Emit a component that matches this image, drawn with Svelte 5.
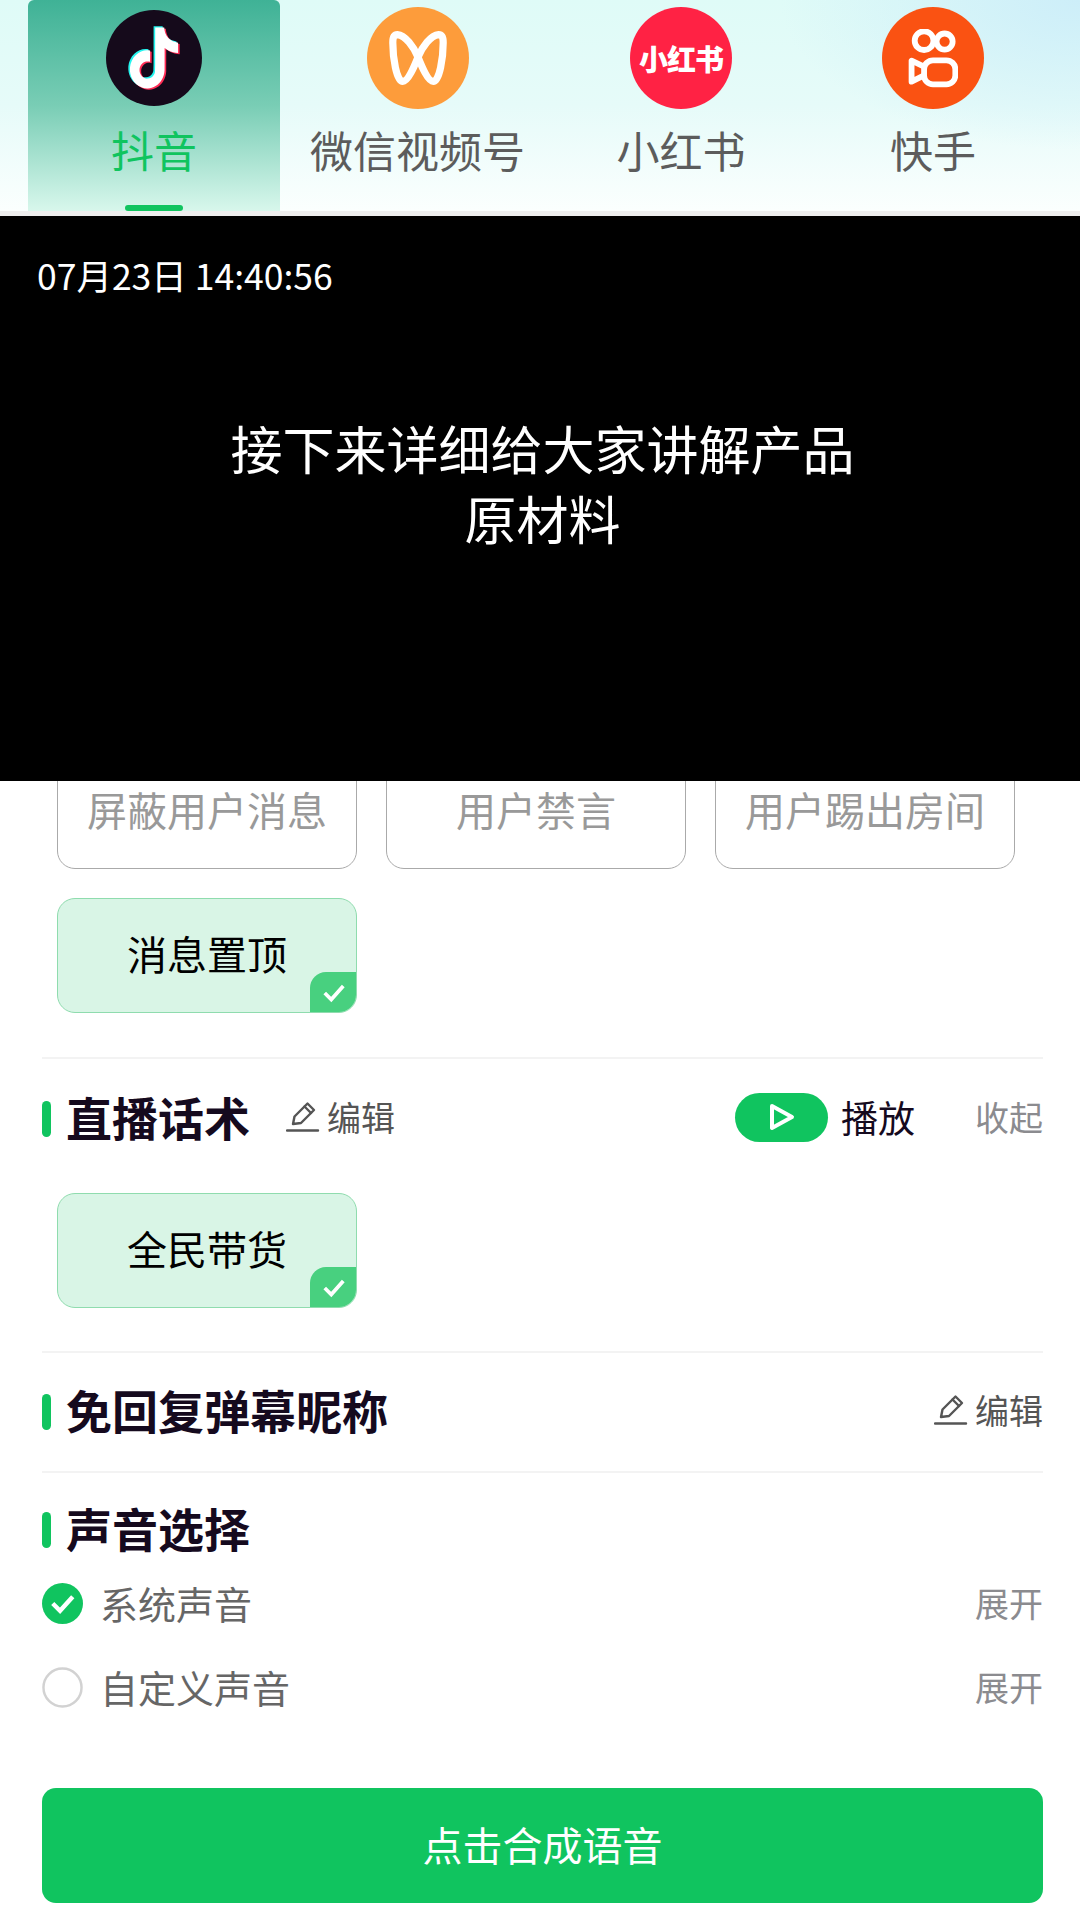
<script lang="ts">
  const tabs = [
    { id: "douyin", label: "抖音", active: true },
    { id: "wechat", label: "微信视频号" },
    { id: "xhs", label: "小红书" },
    { id: "kuaishou", label: "快手" },
  ];

  const note =
    "M12.525.02c1.31-.02 2.61-.01 3.91-.02.08 1.53.63 3.09 1.75 4.17 1.12 1.11 2.7 1.62 4.24 1.79v4.03c-1.44-.05-2.89-.35-4.2-.97-.57-.26-1.1-.59-1.62-.93-.01 2.92.01 5.84-.02 8.75-.08 1.4-.54 2.79-1.35 3.94-1.31 1.92-3.58 3.17-5.91 3.21-1.43.08-2.86-.31-4.08-1.03-2.02-1.19-3.44-3.37-3.65-5.71-.02-.5-.03-1-.01-1.49.18-1.9 1.12-3.72 2.58-4.96 1.66-1.44 3.98-2.13 6.15-1.72.02 1.48-.04 2.96-.04 4.44-.99-.32-2.15-.23-3.02.37-.63.41-1.11 1.04-1.36 1.75-.21.51-.15 1.07-.14 1.61.24 1.64 1.82 3.02 3.5 2.87 1.12-.01 2.19-.66 2.77-1.61.19-.33.4-.67.41-1.06.1-1.79.06-3.57.07-5.36.01-4.03-.01-8.05.02-12.07z";
</script>

{#snippet edit()}
  <span class="edit">
    <svg width="34" height="34" viewBox="0 0 34 34" fill="none" stroke="#555" stroke-width="2.4" stroke-linejoin="round" stroke-linecap="round">
      <path d="M7 25 L8.5 17.5 L21.5 4.5 L28 11 L15 24 Z" />
      <path d="M18.5 7.5 L25 14" />
      <path d="M1 31.5 H32" />
    </svg>
    编辑
  </span>
{/snippet}

{#snippet heading(title)}
  <div class="title"><i class="bar"></i><h2>{title}</h2></div>
{/snippet}

{#snippet chip(label)}
  <div class="chip on">
    {label}
    <span class="corner">
      <svg width="24" height="20" viewBox="0 0 22 18" fill="none" stroke="#fff" stroke-width="3.4">
        <path d="M2.5 9 L8.5 15 L19.5 2.5" />
      </svg>
    </span>
  </div>
{/snippet}

<div class="page">
  <header class="tabs">
    {#each tabs as tab}
      <div class="tab" class:active={tab.active}>
        <span class="logo {tab.id}">
          {#if tab.id === "douyin"}
            <svg width="60" height="66" viewBox="-1 -1 26 26" preserveAspectRatio="none">
              <path d={note} fill="#25f4ee" transform="translate(-0.7 -0.5)" />
              <path d={note} fill="#fe2c55" transform="translate(0.7 0.5)" />
              <path d={note} fill="#fff" />
            </svg>
          {:else if tab.id === "wechat"}
            <svg width="58" height="54" viewBox="0 0 64 60" fill="none" stroke="#fff" stroke-width="8" stroke-linejoin="round">
              <path d="M32 29 C27 17 18 5 9 4 C5 4 4 8 4 13 C4 29 8 56 15 56 C21 56 28 39 32 29 C36 39 43 56 49 56 C56 56 60 29 60 13 C60 8 59 4 55 4 C46 5 37 17 32 29 Z" />
            </svg>
          {:else if tab.id === "xhs"}
            <span class="xhs-mark">小红书</span>
          {:else}
            <svg width="50" height="59" viewBox="0 0 56 66" fill="none" stroke="#fff" stroke-width="6.5" stroke-linejoin="round">
              <circle cx="18" cy="13" r="10.5" />
              <circle cx="41" cy="14" r="9" />
              <rect x="18" y="35" width="35" height="27" rx="10" />
              <path d="M18 42 L4 35.5 V59 L18 52" />
            </svg>
          {/if}
        </span>
        <span class="label">{tab.label}</span>
        {#if tab.active}<i class="underline"></i>{/if}
      </div>
    {/each}
  </header>

  <section class="video">
    <time>07月23日 14:40:56</time>
    <p>接下来详细给大家讲解产品<br />原材料</p>
  </section>

  <main class="scroller">
    <div class="chips first">
      <div class="chip">屏蔽用户消息</div>
      <div class="chip">用户禁言</div>
      <div class="chip">用户踢出房间</div>
      {@render chip("消息置顶")}
    </div>

    <div class="block script">
      <div class="head">
        {@render heading("直播话术")}
        {@render edit()}
        <span class="play">
          <span class="pill">
            <svg width="28" height="30" viewBox="0 0 28 30" fill="none" stroke="#fff" stroke-width="4" stroke-linejoin="round">
              <path d="M4 4 L24 15 L4 26 Z" />
            </svg>
          </span>
          播放
        </span>
        <span class="more">收起</span>
      </div>
      <div class="chips">
        {@render chip("全民带货")}
      </div>
    </div>

    <div class="block nick">
      <div class="head">
        {@render heading("免回复弹幕昵称")}
        <span class="push">{@render edit()}</span>
      </div>
    </div>

    <div class="block voice">
      {@render heading("声音选择")}
      <div class="option first-option">
        <svg class="radio" width="41" height="41" viewBox="0 0 42 42">
          <circle cx="21" cy="21" r="21" fill="#10c45f" />
          <path d="M11 21 L18.5 28.5 L31.5 14" fill="none" stroke="#fff" stroke-width="4.5" />
        </svg>
        <span>系统声音</span>
        <span class="more">展开</span>
      </div>
      <div class="option">
        <svg class="radio" width="41" height="41" viewBox="0 0 42 42">
          <circle cx="21" cy="21" r="19.5" fill="#fff" stroke="#d2d2d2" stroke-width="2.5" />
        </svg>
        <span>自定义声音</span>
        <span class="more">展开</span>
      </div>
    </div>

    <button class="submit">点击合成语音</button>
  </main>
</div>

<style>
  :global(body) {
    background: #fff;
  }

  .page {
    width: 1080px;
    height: 1920px;
    overflow: hidden;
    display: flex;
    flex-direction: column;
    font-family: "Noto Sans CJK SC", "Noto Sans", sans-serif;
    color: #150a1e;
  }

  .tabs {
    height: 211px;
    flex: none;
    display: flex;
    padding-left: 28px;
    box-sizing: content-box;
    border-bottom: 5px solid #eeeeee;
    background:
      radial-gradient(ellipse 300px 150px at 100% 0, #cdeef9 0%, rgba(205, 238, 249, 0) 100%),
      linear-gradient(180deg, #dffbf7 0%, #e6fbf9 50%, #fbfffe 100%);
  }

  .tab {
    position: relative;
    min-width: 252px;
    padding: 0 30px;
    box-sizing: border-box;
    display: flex;
    flex-direction: column;
    align-items: center;
    color: #5c5c5c;
  }

  .tab.active {
    color: #10c45f;
    border-radius: 6px 6px 0 0;
    background: linear-gradient(180deg, #3fb296 0%, #79cdb5 50%, #d8f7ec 100%);
  }

  .logo {
    width: 102px;
    height: 102px;
    margin-top: 7px;
    border-radius: 50%;
    display: flex;
    align-items: center;
    justify-content: center;
    flex: none;
  }

  .douyin {
    width: 96px;
    height: 96px;
    margin-top: 10px;
    margin-bottom: 3px;
    background: #150a1b;
  }
  .wechat {
    background: #fd9c3b;
  }
  .xhs {
    background: #ff2244;
  }
  .kuaishou {
    background: #fa5212;
  }

  .xhs-mark {
    color: #fff;
    font-size: 29px;
    font-weight: 900;
    letter-spacing: -1px;
    white-space: nowrap;
  }

  .label {
    margin-top: 13px;
    font-size: 43px;
    line-height: 54px;
    white-space: nowrap;
  }

  .underline {
    position: absolute;
    left: 97px;
    bottom: 0;
    width: 58px;
    height: 6px;
    border-radius: 3px;
    background: #10c45f;
  }

  .video {
    height: 565px;
    flex: none;
    background: #000;
    color: #fff;
    display: flex;
    flex-direction: column;
    align-items: center;
    position: relative;
  }

  .video time {
    position: absolute;
    left: 37px;
    top: 35px;
    font-size: 35.5px;
    line-height: 48px;
  }

  .video p {
    margin: 197px 0 0 5px;
    font-size: 52px;
    line-height: 70px;
    text-align: center;
  }

  .scroller {
    flex: 1;
    min-height: 0;
    overflow: hidden;
    padding: 0 37px 0 42px;
  }

  .chips {
    display: grid;
    grid-template-columns: repeat(3, 300px);
    gap: 29px;
    padding-left: 15px;
  }

  .chips.first {
    margin-top: -27px;
  }

  .chip {
    position: relative;
    height: 115px;
    box-sizing: border-box;
    overflow: hidden;
    border: 1px solid #aaa;
    border-radius: 18px;
    display: flex;
    align-items: center;
    justify-content: center;
    padding-bottom: 6px;
    font-size: 40px;
    color: #999;
  }

  .chip.on {
    background: #d9f5e6;
    border-color: #8fdcae;
    color: #000;
  }

  .corner {
    position: absolute;
    right: -1px;
    bottom: -1px;
    width: 47px;
    height: 41px;
    border-radius: 16px 0 0 0;
    background: #48d07f;
    display: flex;
    align-items: center;
    justify-content: center;
  }

  .block {
    border-top: 2px solid #f3f3f3;
  }

  .script {
    margin-top: 44px;
    padding-top: 28px;
  }

  .script .chips {
    margin-top: 48px;
  }

  .nick {
    margin-top: 43px;
    padding-top: 27px;
    padding-bottom: 33px;
  }

  .voice {
    padding-top: 25px;
  }

  .head {
    display: flex;
    align-items: center;
    height: 58px;
  }

  .title {
    display: flex;
    align-items: center;
    height: 58px;
  }

  .bar {
    width: 9px;
    height: 36px;
    margin-top: 5px;
    border-radius: 5px;
    background: #10c45f;
    margin-right: 15px;
  }

  h2 {
    margin: 0;
    font-size: 46px;
    font-weight: 700;
    color: #150a1e;
  }

  .edit {
    display: inline-flex;
    align-items: center;
    gap: 7px;
    margin-left: 36px;
    font-size: 34px;
    color: #555;
  }

  .push {
    margin-left: auto;
  }

  .play {
    display: inline-flex;
    align-items: center;
    gap: 13px;
    margin-left: auto;
    margin-top: 2px;
    font-size: 37px;
    color: #150a1e;
  }

  .pill {
    width: 93px;
    height: 49px;
    border-radius: 25px;
    background: #10c45f;
    display: flex;
    align-items: center;
    justify-content: center;
  }

  .more {
    margin-left: auto;
    font-size: 34px;
    color: #8b8b8f;
  }

  .play + .more {
    margin-left: 60px;
  }

  .option {
    display: flex;
    align-items: center;
    height: 60px;
    margin-top: 24px;
    font-size: 38px;
    color: #666;
  }

  .first-option {
    margin-top: 16px;
  }

  .radio {
    margin-top: 2px;
    margin-right: 17px;
    flex: none;
  }

  .submit {
    display: block;
    width: 1001px;
    height: 115px;
    margin-top: 72px;
    padding: 0 0 4px;
    border: 0;
    border-radius: 14px;
    background: #10c45f;
    color: #fff;
    font: inherit;
    font-size: 40px;
  }
</style>
